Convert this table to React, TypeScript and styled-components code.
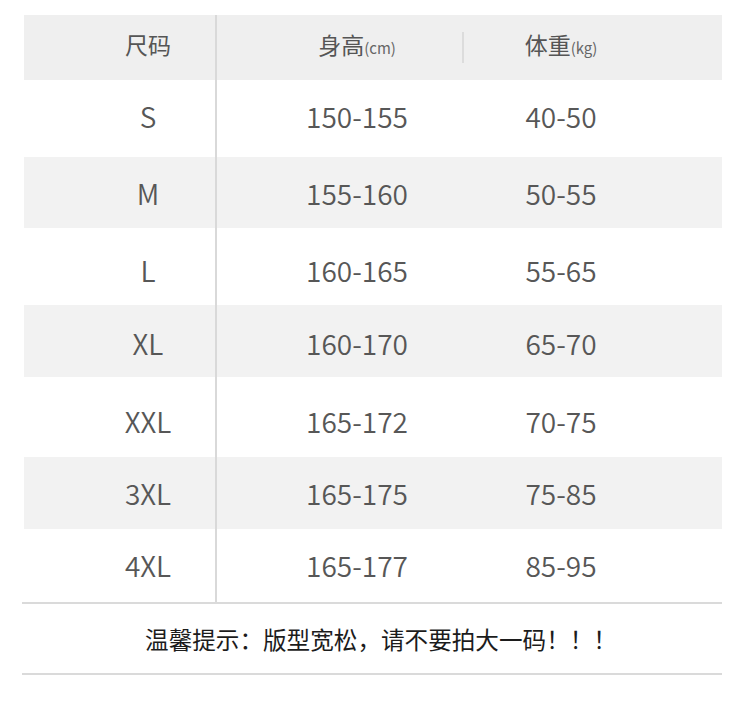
import styled, { createGlobalStyle } from "styled-components";

const GlobalStyle = createGlobalStyle`
  html, body {
    margin: 0;
    padding: 0;
    background: #ffffff;
  }
  body {
    font-family: "Noto Sans CJK SC", "Noto Sans", sans-serif;
  }
`;

type SizeRow = {
  size: string;
  height: string;
  weight: string;
  h: number;
  dy: number;
};

// row heights and text nudges follow the original artwork
const rows: SizeRow[] = [
  { size: "S", height: "150-155", weight: "40-50", h: 77, dy: -5 },
  { size: "M", height: "155-160", weight: "50-55", h: 71, dy: 1 },
  { size: "L", height: "160-165", weight: "55-65", h: 77, dy: 7 },
  { size: "XL", height: "160-170", weight: "65-70", h: 72, dy: 3 },
  { size: "XXL", height: "165-172", weight: "70-75", h: 80, dy: 7 },
  { size: "3XL", height: "165-175", weight: "75-85", h: 72, dy: -1 },
  { size: "4XL", height: "165-177", weight: "85-95", h: 73, dy: -1 },
];

const Page = styled.div`
  width: 750px;
  height: 702px;
  padding-top: 15px;
  box-sizing: border-box;
  background: #fff;
`;

const Table = styled.div`
  margin-left: 24px;
  width: 698px;
  display: flex;
  flex-direction: column;
`;

const Row = styled.div<{ $shade?: boolean; $header?: boolean; $h: number }>`
  display: grid;
  grid-template-columns: 193px 245px 260px;
  height: ${(p) => p.$h}px;
  background: ${(p) => (p.$header ? "#efefef" : p.$shade ? "#f2f2f2" : "#ffffff")};
`;

const Cell = styled.div<{ $col: 1 | 2 | 3; $dy?: number }>`
  position: relative;
  display: flex;
  align-items: center;
  justify-content: center;
  box-sizing: border-box;
  padding-top: ${(p) => Math.max(p.$dy ?? 0, 0)}px;
  padding-bottom: ${(p) => Math.max(-(p.$dy ?? 0), 0)}px;
  padding-left: ${(p) => (p.$col === 1 ? 57 : p.$col === 2 ? 35 : 0)}px;
  padding-right: ${(p) => (p.$col === 3 ? 62 : 0)}px;
  border-right: ${(p) => (p.$col === 1 ? "2px solid #d9d9d9" : "none")};
  color: #575757;
  font-size: 28px;
  font-weight: 350;
  line-height: 1;
  white-space: nowrap;
`;

const HeaderLabel = styled.span`
  font-size: 23px;
  font-weight: 400;
  color: #555;
  line-height: 1;
  margin-bottom: 6px;
`;

const Unit = styled.small`
  font-size: 15px;
  color: #666;
`;

const HeaderSep = styled.span`
  position: absolute;
  left: 0;
  top: 17px;
  width: 2px;
  height: 31px;
  background: #dcdcdc;
`;

const Footer = styled.div`
  margin-left: 22px;
  width: 700px;
  height: 73px;
  border-top: 2px solid #dadada;
  border-bottom: 2px solid #dadada;
  display: flex;
  align-items: center;
  justify-content: center;
  box-sizing: border-box;
`;

const Note = styled.p`
  margin: 0 0 0 18px;
  font-size: 23.6px;
  color: #1c1c1c;
`;

export default function App() {
  return (
    <Page>
      <GlobalStyle />
      <Table>
        <Row $header $h={65}>
          <Cell $col={1}>
            <HeaderLabel>尺码</HeaderLabel>
          </Cell>
          <Cell $col={2}>
            <HeaderLabel>
              身高<Unit>(cm)</Unit>
            </HeaderLabel>
          </Cell>
          <Cell $col={3}>
            <HeaderSep />
            <HeaderLabel>
              体重<Unit>(kg)</Unit>
            </HeaderLabel>
          </Cell>
        </Row>
        {rows.map((r, i) => (
          <Row key={r.size} $shade={i % 2 === 1} $h={r.h}>
            <Cell $col={1} $dy={r.dy}>
              {r.size}
            </Cell>
            <Cell $col={2} $dy={r.dy}>
              {r.height}
            </Cell>
            <Cell $col={3} $dy={r.dy}>
              {r.weight}
            </Cell>
          </Row>
        ))}
      </Table>
      <Footer>
        <Note>温馨提示：版型宽松，请不要拍大一码！！！</Note>
      </Footer>
    </Page>
  );
}
